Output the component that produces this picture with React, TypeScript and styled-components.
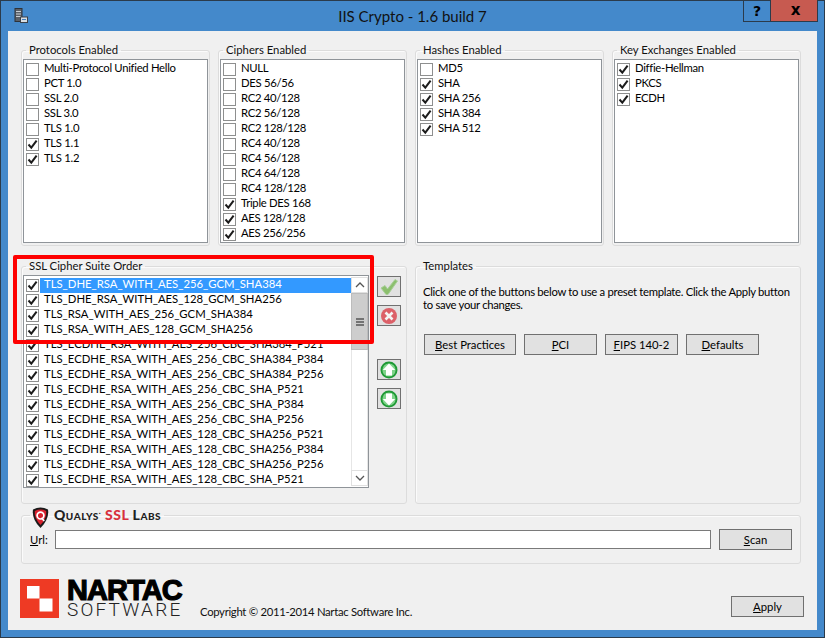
import React from 'react';
import styled, { createGlobalStyle } from 'styled-components';

const GlobalStyle = createGlobalStyle`
  html, body {
    margin: 0;
    padding: 0;
    width: 825px;
    height: 638px;
    overflow: hidden;
    background: #4489cb;
  }
  * { box-sizing: border-box; }
`;

const uiFont = `"Lato", "Open Sans", "Liberation Sans", sans-serif`;

const protocols: [string, boolean][] = [
  ['Multi-Protocol Unified Hello', false],
  ['PCT 1.0', false],
  ['SSL 2.0', false],
  ['SSL 3.0', false],
  ['TLS 1.0', false],
  ['TLS 1.1', true],
  ['TLS 1.2', true],
];

const ciphers: [string, boolean][] = [
  ['NULL', false],
  ['DES 56/56', false],
  ['RC2 40/128', false],
  ['RC2 56/128', false],
  ['RC2 128/128', false],
  ['RC4 40/128', false],
  ['RC4 56/128', false],
  ['RC4 64/128', false],
  ['RC4 128/128', false],
  ['Triple DES 168', true],
  ['AES 128/128', true],
  ['AES 256/256', true],
];

const hashes: [string, boolean][] = [
  ['MD5', false],
  ['SHA', true],
  ['SHA 256', true],
  ['SHA 384', true],
  ['SHA 512', true],
];

const exchanges: [string, boolean][] = [
  ['Diffie-Hellman', true],
  ['PKCS', true],
  ['ECDH', true],
];

const suites = [
  'TLS_DHE_RSA_WITH_AES_256_GCM_SHA384',
  'TLS_DHE_RSA_WITH_AES_128_GCM_SHA256',
  'TLS_RSA_WITH_AES_256_GCM_SHA384',
  'TLS_RSA_WITH_AES_128_GCM_SHA256',
  'TLS_ECDHE_RSA_WITH_AES_256_CBC_SHA384_P521',
  'TLS_ECDHE_RSA_WITH_AES_256_CBC_SHA384_P384',
  'TLS_ECDHE_RSA_WITH_AES_256_CBC_SHA384_P256',
  'TLS_ECDHE_RSA_WITH_AES_256_CBC_SHA_P521',
  'TLS_ECDHE_RSA_WITH_AES_256_CBC_SHA_P384',
  'TLS_ECDHE_RSA_WITH_AES_256_CBC_SHA_P256',
  'TLS_ECDHE_RSA_WITH_AES_128_CBC_SHA256_P521',
  'TLS_ECDHE_RSA_WITH_AES_128_CBC_SHA256_P384',
  'TLS_ECDHE_RSA_WITH_AES_128_CBC_SHA256_P256',
  'TLS_ECDHE_RSA_WITH_AES_128_CBC_SHA_P521',
];

const CheckRow = ({ label, checked, selected, tight }: { label: string; checked: boolean; selected?: boolean; tight?: boolean }) => (
  <Row>
    <Box>
      {checked && (
        <svg width="11" height="11" viewBox="0 0 11 11">
          <path d="M1.5 5.5 L4.3 8.6 L9.6 1.6" fill="none" stroke="#1c1c1c" strokeWidth="2" />
        </svg>
      )}
    </Box>
    <RowLabel $selected={selected} $tight={tight}>{label}</RowLabel>
  </Row>
);

const CheckGroup = ({ title, items }: { title: string; items: [string, boolean][] }) => (
  <Group>
    <Legend>{title}</Legend>
    <ListBox $height={184}>
      <Rows>
        {items.map(([label, checked]) => (
          <CheckRow key={label} label={label} checked={checked} tight />
        ))}
      </Rows>
    </ListBox>
  </Group>
);

const Chevron = ({ up }: { up?: boolean }) => (
  <svg width="10" height="6" viewBox="0 0 10 6">
    <path d={up ? 'M1 5 L5 1 L9 5' : 'M1 1 L5 5 L9 1'} fill="none" stroke="#555" strokeWidth="1.3" />
  </svg>
);

const ArrowIcon = ({ up }: { up?: boolean }) => (
  <svg width="18" height="18" viewBox="0 0 18 18">
    <circle cx="9" cy="9" r="8.5" fill="#1f9a35" />
    <circle cx="9" cy="9" r="6.6" fill="#7fd38a" />
    <path
      d={up ? 'M9 2.5 L15.2 9 H12 V14.5 H6 V9 H2.8 Z' : 'M9 15.5 L15.2 9 H12 V3.5 H6 V9 H2.8 Z'}
      fill="#fff"
    />
  </svg>
);

const App = () => (
  <Window>
    <GlobalStyle />
    <TitleBar>
      <TitleIcon>
        <svg width="14" height="15" viewBox="0 0 14 15">
          <rect x="1" y="0.5" width="7" height="13" fill="#5a6068" stroke="#2e3238" />
          <path d="M2 3.5 H7 M2 6 H7 M2 8.5 H7" stroke="#c9ced4" strokeWidth="1" />
          <rect x="6.5" y="9" width="7" height="5.5" fill="#d8dde2" stroke="#3a4048" />
          <path d="M8 11.5 H12" stroke="#3f7fc0" />
        </svg>
      </TitleIcon>
      <Title>IIS Crypto - 1.6 build 7</Title>
      <WindowButtons>
        <HelpButton>?</HelpButton>
        <CloseButton>x</CloseButton>
      </WindowButtons>
    </TitleBar>
    <Client>
      <TopRow>
        <CheckGroup title="Protocols Enabled" items={protocols} />
        <CheckGroup title="Ciphers Enabled" items={ciphers} />
        <CheckGroup title="Hashes Enabled" items={hashes} />
        <CheckGroup title="Key Exchanges Enabled" items={exchanges} />
      </TopRow>
      <MiddleRow>
        <Group>
          <Legend>SSL Cipher Suite Order</Legend>
          <SuiteBody>
            <ListBox $height={213}>
              <Rows>
                {suites.map((suite, i) => (
                  <CheckRow key={suite} label={suite} checked selected={i === 0} />
                ))}
              </Rows>
              <ScrollBar>
                <ScrollArrow><Chevron up /></ScrollArrow>
                <ScrollThumb>
                  <svg width="8" height="8" viewBox="0 0 8 8">
                    <path d="M0 1 H8 M0 4 H8 M0 7 H8" stroke="#555" strokeWidth="1.4" />
                  </svg>
                </ScrollThumb>
                <ScrollTrack />
                <ScrollArrow><Chevron /></ScrollArrow>
              </ScrollBar>
            </ListBox>
            <SideButtons>
              <SideButton>
                <svg width="20" height="18" viewBox="0 0 20 18">
                  <path d="M2 10 L6 7.5 L8.5 11 L16 1.5 L18.5 3 L9 16.5 H7 Z" fill="#8cbf6e" stroke="#a9cf9a" strokeWidth="1" />
                </svg>
              </SideButton>
              <SideButton>
                <svg width="18" height="18" viewBox="0 0 18 18">
                  <circle cx="9" cy="9" r="8" fill="#dc6068" />
                  <path d="M5.5 5.5 L12.5 12.5 M12.5 5.5 L5.5 12.5" stroke="#f4f4f4" strokeWidth="2.6" />
                </svg>
              </SideButton>
              <SideGap />
              <SideButton><ArrowIcon up /></SideButton>
              <SideButton><ArrowIcon /></SideButton>
            </SideButtons>
          </SuiteBody>
        </Group>
        <Group>
          <Legend>Templates</Legend>
          <TemplateBody>
            <TemplateText>
              Click one of the buttons below to use a preset template. Click the Apply button<br />
              to save your changes.
            </TemplateText>
            <TemplateButtons>
              <PushButton $width={92}><u>B</u>est Practices</PushButton>
              <PushButton><u>P</u>CI</PushButton>
              <PushButton><u>F</u>IPS 140-2</PushButton>
              <PushButton><u>D</u>efaults</PushButton>
            </TemplateButtons>
          </TemplateBody>
        </Group>
        <Highlight />
      </MiddleRow>
      <ScanGroup>
        <QualysLegend>
          <svg width="17" height="21" viewBox="0 0 17 21">
            <path d="M1 2.5 Q8.5 -1.5 16 2.5 Q17.5 12 8.5 21 Q-0.5 12 1 2.5 Z" fill="#1a1a1a" />
            <path d="M2.8 4 Q8.5 1.2 14.2 4 Q15 11 8.5 18 Q2 11 2.8 4 Z" fill="#d8202c" />
            <circle cx="8.5" cy="8.6" r="3.4" fill="none" stroke="#fff" strokeWidth="1.7" />
            <path d="M9.5 10.8 L12.2 14" stroke="#fff" strokeWidth="1.7" />
          </svg>
          <QualysText>Qualys<sup>.</sup> <QualysRed>SSL</QualysRed> Labs</QualysText>
        </QualysLegend>
        <ScanRow>
          <UrlLabel><u>U</u>rl:</UrlLabel>
          <UrlInput />
          <PushButton><u>S</u>can</PushButton>
        </ScanRow>
      </ScanGroup>
      <Footer>
        <NartacMark>
          <svg width="39" height="39" viewBox="0 0 39 39">
            <rect width="39" height="39" fill="#ee3a24" />
            <rect x="7" y="7" width="12.5" height="12.5" fill="#fff" />
            <rect x="19.5" y="19.5" width="13" height="13" fill="#fff" />
          </svg>
        </NartacMark>
        <NartacText>
          <NartacName>NARTAC</NartacName>
          <NartacSub>SOFTWARE</NartacSub>
        </NartacText>
        <Copyright>Copyright © 2011-2014 Nartac Software Inc.</Copyright>
        <ApplyWrap>
          <PushButton><u>A</u>pply</PushButton>
        </ApplyWrap>
      </Footer>
    </Client>
  </Window>
);

const Window = styled.div`
  width: 825px;
  height: 638px;
  display: flex;
  flex-direction: column;
  background: #4489cb;
  border: 1px solid #2b3b4b;
  padding: 0 7px 7px;
  font-family: ${uiFont};
  font-size: 11.3px;
  color: #000;
`;

const TitleBar = styled.div`
  height: 30px;
  flex: none;
  position: relative;
  display: flex;
  align-items: center;
  justify-content: center;
`;

const TitleIcon = styled.div`
  position: absolute;
  left: 6px;
  top: 7px;
  line-height: 0;
`;

const Title = styled.div`
  font-size: 15px;
  color: #111;
`;

const WindowButtons = styled.div`
  position: absolute;
  top: -1px;
  right: -1px;
  display: flex;
  height: 22px;
  border: 1px solid #2b3b4b;
  border-top: 0;
  font-family: "DejaVu Sans", sans-serif;
  font-weight: 700;
`;

const HelpButton = styled.div`
  width: 27px;
  display: flex;
  align-items: center;
  justify-content: center;
  font-size: 14px;
  border-right: 1px solid #2b3b4b;
`;

const CloseButton = styled.div`
  width: 46px;
  display: flex;
  align-items: center;
  justify-content: center;
  background: #c75a50;
  font-size: 15px;
  line-height: 1;
  padding-left: 3px;
`;

const Client = styled.div`
  flex: 1;
  background: #f0f0f0;
  padding: 12px 16px 0 13px;
  display: flex;
  flex-direction: column;
`;

const TopRow = styled.div`
  display: grid;
  grid-template-columns: repeat(4, 189px);
  gap: 8px;
  height: 203px;
`;

const MiddleRow = styled.div`
  position: relative;
  margin-top: 13px;
  display: grid;
  grid-template-columns: 386px 386px;
  gap: 8px;
  height: 245px;
`;

const Highlight = styled.div`
  position: absolute;
  left: -8px;
  top: -4px;
  width: 361px;
  height: 89px;
  border: 4px solid #fe0000;
  border-radius: 2px;
  pointer-events: none;
`;

const Group = styled.fieldset`
  margin: 0;
  min-width: 0;
  padding: 0 1px 1px;
  border: 1px solid #dcdcdc;
  border-radius: 3px;
  box-shadow: inset 1px 1px 0 #fbfbfb;
`;

const Legend = styled.legend`
  margin-left: 3px;
  padding: 0 3px;
  height: 14px;
  line-height: 14px;
  color: #111;
`;

const ListBox = styled.div<{ $height: number }>`
  height: ${(p) => p.$height}px;
  margin-top: 2px;
  background: #fff;
  border: 1px solid #8f9499;
  display: flex;
  flex: 1;
  min-width: 0;
  overflow: hidden;
`;

const Rows = styled.div`
  flex: 1;
  min-width: 0;
  padding-top: 2px;
`;

const Row = styled.div`
  height: 15px;
  display: flex;
  align-items: center;
  padding-left: 2px;
  white-space: nowrap;
`;

const Box = styled.span`
  width: 13px;
  height: 13px;
  flex: none;
  border: 1px solid #8e8f8f;
  background: #fff;
  display: flex;
  align-items: center;
  justify-content: center;
`;

const RowLabel = styled.span<{ $selected?: boolean; $tight?: boolean }>`
  flex: 1;
  height: 15px;
  line-height: 12px;
  margin-left: 1px;
  padding-left: 4px;
  letter-spacing: ${(p) => (p.$tight ? '-0.3px' : '0')};
  background: ${(p) => (p.$selected ? '#3399ff' : 'transparent')};
  color: ${(p) => (p.$selected ? '#fff' : '#000')};
`;

const SuiteBody = styled.div`
  display: flex;
  gap: 8px;
  padding-right: 4px;
  align-items: flex-start;
`;

const ScrollBar = styled.div`
  width: 17px;
  flex: none;
  display: flex;
  flex-direction: column;
  padding: 1px 0;
`;

const ScrollArrow = styled.div`
  height: 16px;
  flex: none;
  border: 1px solid #e0e0e0;
  display: flex;
  align-items: center;
  justify-content: center;
`;

const ScrollThumb = styled.div`
  height: 57px;
  flex: none;
  background: #cdcdcd;
  border: 1px solid #bcbcbc;
  display: flex;
  align-items: center;
  justify-content: center;
`;

const ScrollTrack = styled.div`
  flex: 1;
  border-left: 1px solid #e6e6e6;
  border-right: 1px solid #e6e6e6;
`;

const SideButtons = styled.div`
  display: flex;
  flex-direction: column;
  gap: 8px;
  margin-top: 3px;
`;

const SideGap = styled.div`
  height: 17px;
`;

const SideButton = styled.div`
  width: 24px;
  height: 21px;
  background: #e1e1e1;
  border: 1px solid #707070;
  display: flex;
  align-items: center;
  justify-content: center;
`;

const TemplateBody = styled.div`
  padding: 12px 0 0 6px;
`;

const TemplateText = styled.div`
  line-height: 13px;
  letter-spacing: -0.3px;
  white-space: nowrap;
`;

const TemplateButtons = styled.div`
  display: flex;
  gap: 8px;
  margin-top: 23px;
  padding-left: 1px;
`;

const PushButton = styled.div<{ $width?: number }>`
  width: ${(p) => p.$width ?? 73}px;
  height: 21px;
  flex: none;
  background: #e1e1e1;
  border: 1px solid #707070;
  display: flex;
  align-items: center;
  justify-content: center;
  white-space: pre;
`;

const ScanGroup = styled(Group)`
  margin-top: 4px;
  height: 56px;
  padding: 0 8px 0 8px;
`;

const QualysLegend = styled.legend`
  margin-left: 0;
  padding: 0 3px 0 2px;
  height: 14px;
  display: flex;
  align-items: flex-start;
  gap: 5px;

  svg {
    margin-top: -1px;
    flex: none;
  }
`;

const QualysText = styled.span`
  font-family: "Lato", sans-serif;
  font-weight: 900;
  font-variant: small-caps;
  font-size: 14px;
  line-height: 14px;
  letter-spacing: 0.5px;
  color: #222;
  white-space: pre;

  sup {
    font-size: 8px;
    line-height: 0;
  }
`;

const QualysRed = styled.span`
  color: #d8303c;
`;

const ScanRow = styled.div`
  display: flex;
  align-items: center;
  margin-top: 7px;
`;

const UrlLabel = styled.div`
  width: 25px;
  flex: none;
`;

const UrlInput = styled.div`
  flex: 1;
  height: 19px;
  background: #fff;
  border: 1px solid #7a7a7a;
  margin-right: 8px;
`;

const Footer = styled.div`
  display: flex;
  align-items: flex-end;
  margin: 15px -3px 0 -1px;
  height: 39px;
`;

const NartacMark = styled.div`
  width: 39px;
  height: 39px;
  line-height: 0;
  flex: none;
`;

const NartacText = styled.div`
  width: 115px;
  margin-left: 8px;
  flex: none;
  display: flex;
  flex-direction: column;
`;

const NartacName = styled.div`
  font-family: "Liberation Sans", sans-serif;
  font-weight: 700;
  font-size: 29px;
  line-height: 22px;
  height: 22px;
  letter-spacing: -0.9px;
  -webkit-text-stroke: 1.2px #000;
  color: #000;
`;

const NartacSub = styled.div`
  font-family: "Roboto", sans-serif;
  font-weight: 300;
  font-size: 19px;
  line-height: 17px;
  height: 17px;
  letter-spacing: 2.2px;
  color: #222;
`;

const Copyright = styled.div`
  margin: 0 0 -1px 18px;
  line-height: 14px;
  letter-spacing: -0.3px;
  color: #111;
`;

const ApplyWrap = styled.div`
  margin-left: auto;
  margin-bottom: 1px;
`;

export default App;
